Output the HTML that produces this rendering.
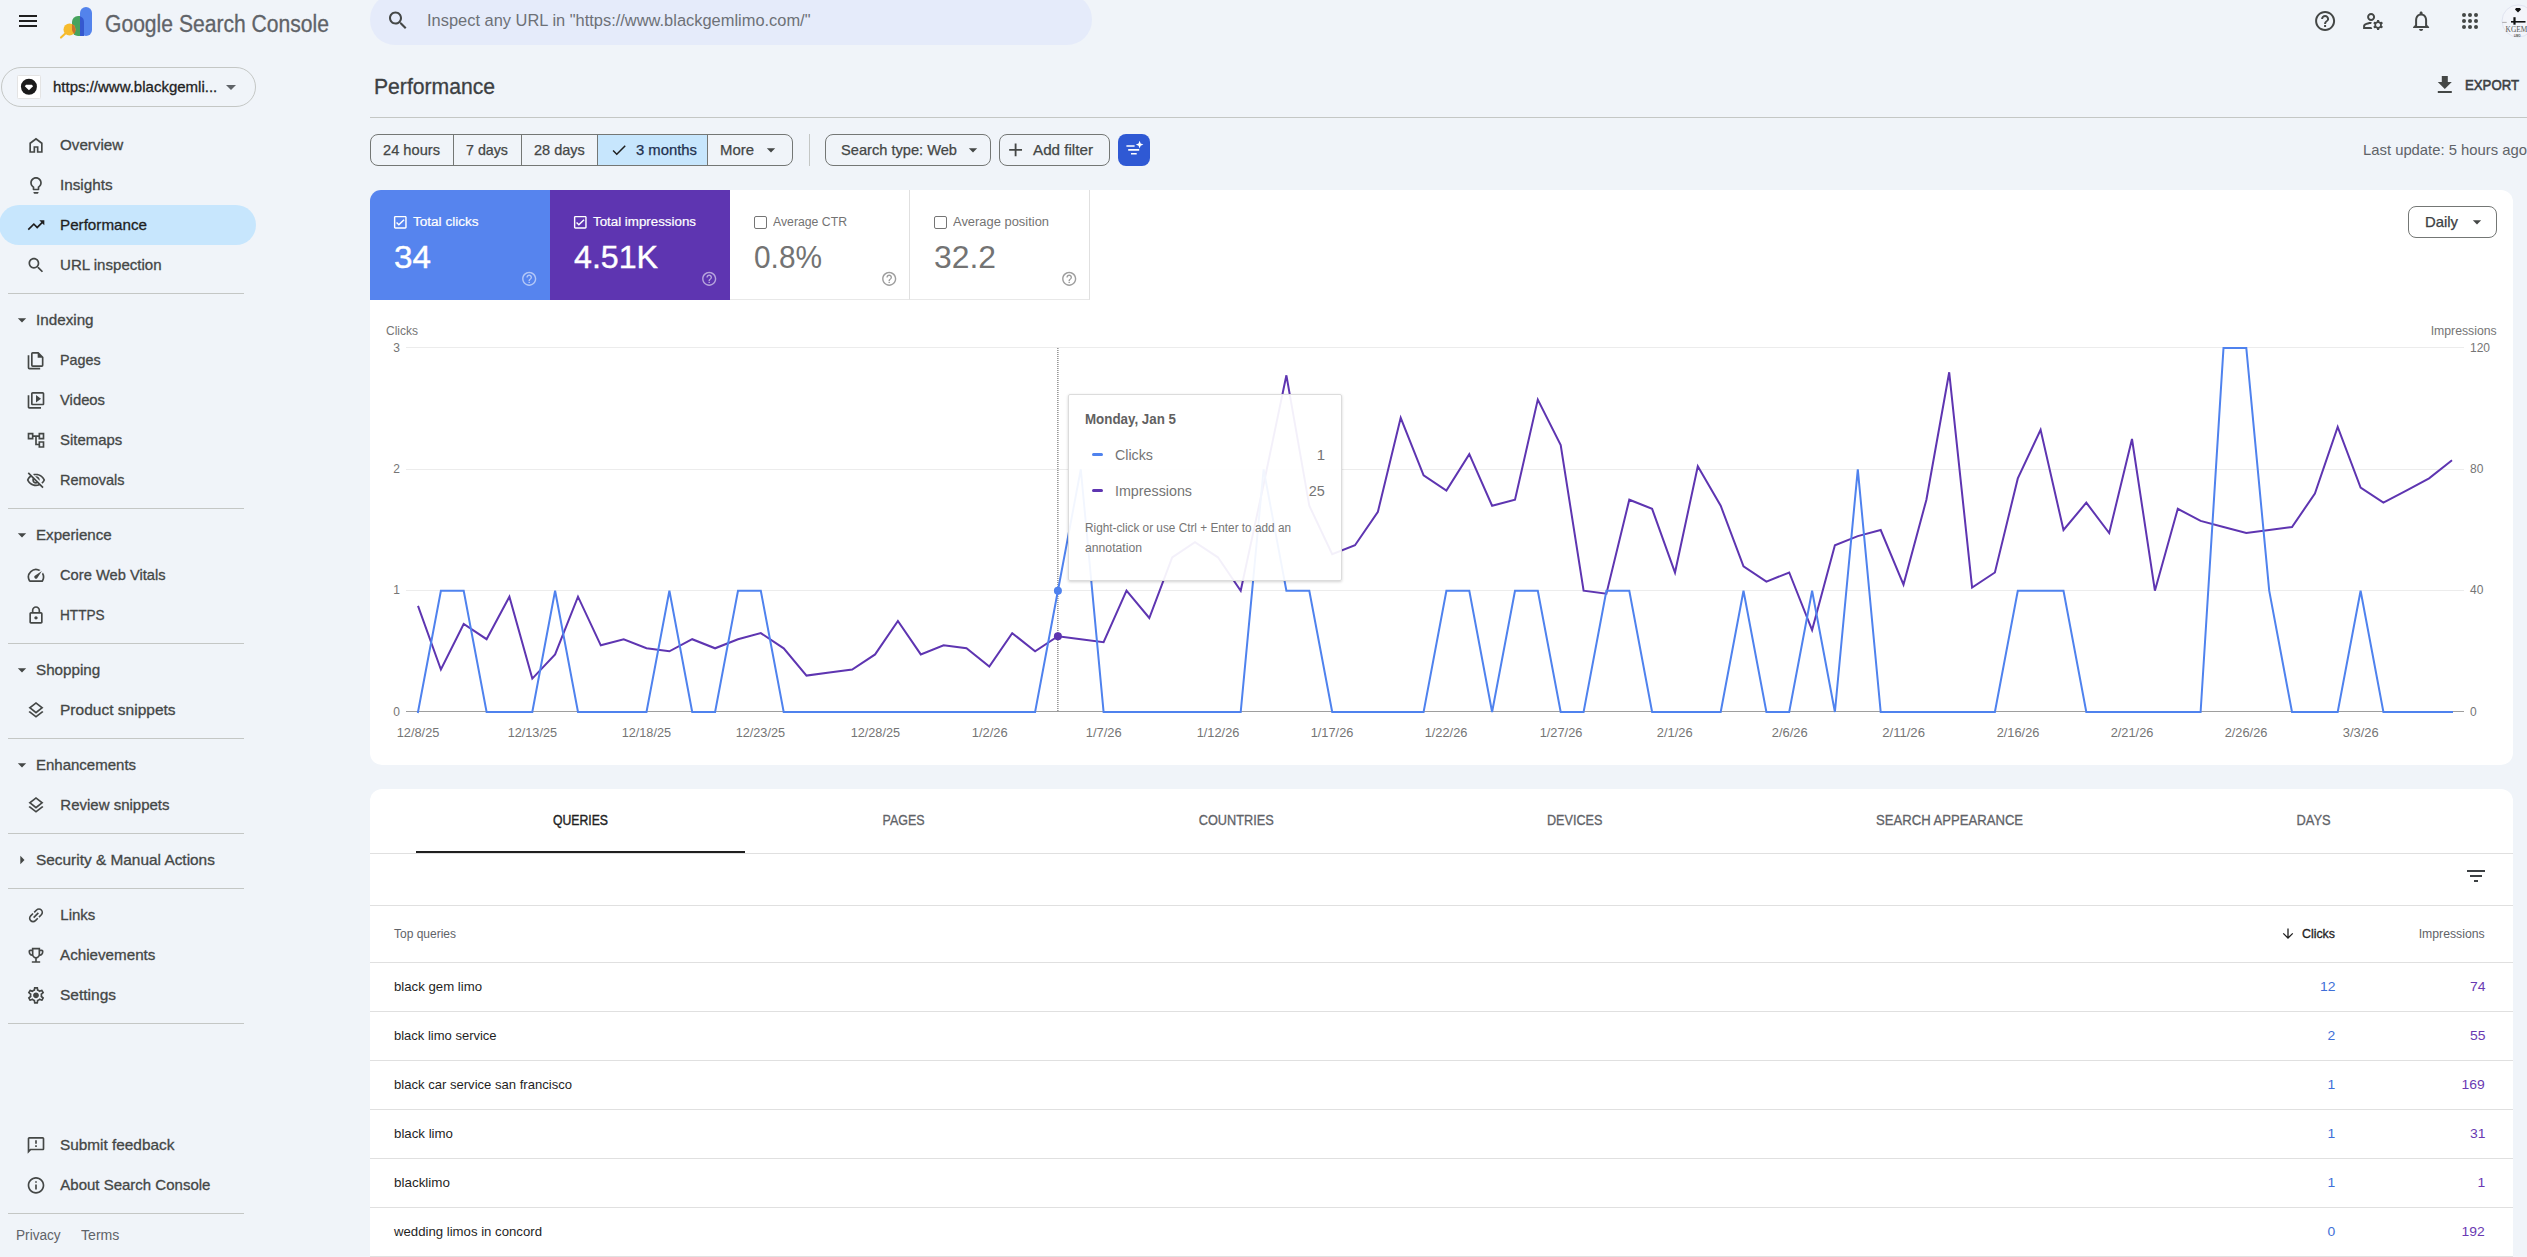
<!DOCTYPE html>
<html lang="en"><head><meta charset="utf-8"><title>Performance</title>
<style>
html,body{margin:0;padding:0}
body{width:2527px;height:1257px;overflow:hidden;background:#f0f4f9;position:relative;font-family:"Liberation Sans",sans-serif}
.t{position:absolute;white-space:pre;display:block}
.b{position:absolute;box-sizing:border-box;display:block}
</style></head><body>
<!-- top bar -->
<svg class="b" style="left:16px;top:9px;" width="25" height="25" viewBox="0 0 25 25" fill="#1f1f1f"><g transform="translate(0.00 0.10) scale(1.0000)"><path d="M3 18h18v-2H3v2zm0-5h18v-2H3v2zm0-7v2h18V6H3z"/></g></svg>
<svg class="b" style="left:58px;top:4px" width="36" height="36" viewBox="0 0 36 36">
<rect x="22" y="3" width="12" height="29" rx="6" fill="#5383ec"/>
<path d="M14 18a6 6 0 0 1 6-6h2v20h-2a6 6 0 0 1-6-6z" fill="#46a35e"/>
<path d="M22 12.340A6 6 0 0 1 26 18V32H22z" fill="#3558cf"/>
<circle cx="11.5" cy="25.5" r="6" fill="#f6bb2d"/>
<path d="M14 19.9a6 6 0 0 1 3.4 4.6 6 6 0 0 1-1 5.4A6 6 0 0 1 14 26z" fill="#c8722e"/>
<path d="M7.6 29.2l-4.6 4.4" stroke="#f6bb2d" stroke-width="2.100" stroke-linecap="round"/>
</svg>
<span class="t" style="left:104.50px;top:9.00px;font-size:23.5px;line-height:31px;color:#5f6368;-webkit-text-stroke:0.3px #5f6368;transform:scaleX(0.8977);transform-origin:left center;">Google Search Console</span>
<div class="b" style="left:370px;top:-6px;width:722px;height:50.5px;background:#e5ebfa;border-radius:25px"></div>
<svg class="b" style="left:386px;top:8px;" width="25" height="25" viewBox="0 0 25 25" fill="#444746"><g transform="translate(0.00 0.50) scale(1.0000)"><path d="M15.5 14h-.79l-.28-.27C15.41 12.59 16 11.11 16 9.5 16 5.91 13.09 3 9.5 3S3 5.91 3 9.5 5.91 16 9.5 16c1.61 0 3.09-.59 4.23-1.57l.27.28v.79l5 4.99L20.49 19l-4.99-5zm-6 0C7.01 14 5 11.99 5 9.5S7.01 5 9.5 5 14 7.01 14 9.5 11.99 14 9.5 14z"/></g></svg>
<span class="t" style="left:427.00px;top:9.30px;font-size:17.4px;line-height:23px;color:#6d7177;transform:scaleX(0.9445);transform-origin:left center;">Inspect any URL in &quot;https://www.blackgemlimo.com/&quot;</span>
<svg class="b" style="left:2313px;top:9px;" width="25" height="25" viewBox="0 0 25 25" fill="#444746"><g transform="translate(0.10 0.00) scale(1.0000)"><path d="M11 18h2v-2h-2v2zm1-16C6.48 2 2 6.48 2 12s4.48 10 10 10 10-4.48 10-10S17.52 2 12 2zm0 18c-4.41 0-8-3.59-8-8s3.59-8 8-8 8 3.59 8 8-3.59 8-8 8zm0-14c-2.21 0-4 1.79-4 4h2c0-1.1.9-2 2-2s2 .9 2 2c0 2-3 1.75-3 5h2c0-2.25 3-2.5 3-5 0-2.21-1.79-4-4-4z"/></g></svg>
<svg class="b" style="left:2361px;top:9px;" width="25" height="25" viewBox="0 0 25 25" fill="#444746"><g transform="translate(0.10 0.00) scale(1.0000)"><path d="M4 18v-.65c0-.34.16-.66.41-.81C6.1 15.53 8.03 15 10 15c.03 0 .05 0 .08.01.1-.7.3-1.37.59-1.98-.22-.02-.44-.03-.67-.03-2.42 0-4.68.67-6.61 1.82-.88.52-1.39 1.5-1.39 2.53V20h9.26c-.42-.6-.75-1.28-.97-2H4zM10 12c2.21 0 4-1.79 4-4s-1.79-4-4-4-4 1.79-4 4 1.79 4 4 4zm0-6c1.1 0 2 .9 2 2s-.9 2-2 2-2-.9-2-2 .9-2 2-2zM20.75 16c0-.22-.03-.42-.06-.63l1.14-1.01-1-1.73-1.45.49c-.32-.27-.68-.48-1.08-.63L18 11h-2l-.3 1.49c-.4.15-.76.36-1.08.63l-1.45-.49-1 1.73 1.14 1.01c-.03.21-.06.41-.06.63s.03.42.06.63l-1.14 1.01 1 1.73 1.45-.49c.32.27.68.48 1.08.63L16 21h2l.3-1.49c.4-.15.76-.36 1.080-.63l1.45.49 1-1.730-1.140-1.010c.03-.21.06-.41.06-.63zM17 18c-1.1 0-2-.9-2-2s.9-2 2-2 2 .9 2 2-.9 2-2 2z"/></g></svg>
<svg class="b" style="left:2409px;top:9px;" width="25" height="25" viewBox="0 0 25 25" fill="#444746"><g transform="translate(0.10 0.00) scale(1.0000)"><path d="M12 22c1.1 0 2-.9 2-2h-4c0 1.1.9 2 2 2zm6-6v-5c0-3.07-1.63-5.64-4.5-6.32V4c0-.83-.67-1.5-1.5-1.5s-1.5.67-1.5 1.5v.68C7.64 5.36 6 7.92 6 11v5l-2 2v1h16v-1l-2-2zm-2 1H8v-6c0-2.48 1.51-4.5 4-4.5s4 2.02 4 4.5v6z"/></g></svg>
<svg class="b" style="left:2458px;top:8px;" width="25" height="25" viewBox="0 0 25 25" fill="#444746"><g transform="translate(0.00 0.90) scale(1.0000)"><circle cx="6" cy="6" r="2" /><circle cx="6" cy="12" r="2" /><circle cx="6" cy="18" r="2" /><circle cx="12" cy="6" r="2" /><circle cx="12" cy="12" r="2" /><circle cx="12" cy="18" r="2" /><circle cx="18" cy="6" r="2" /><circle cx="18" cy="12" r="2" /><circle cx="18" cy="18" r="2" /></g></svg>
<svg class="b" style="left:2501px;top:4px" width="34" height="34" viewBox="0 0 34 34">
<circle cx="17.100" cy="17" r="16.100" fill="#f3f5fa" stroke="#d9dcec" stroke-width="0.700"/>
<path d="M14 5.600l1-1.500h4l1 1.500-3 3z" fill="#111"/>
<path d="M10 17.800h14.500" stroke="#111" stroke-width="1.600"/><path d="M13.500 13.200v7.500" stroke="#111" stroke-width="2.200"/>
<path d="M1.200 18.400h4.500" stroke="#999" stroke-width="0.800"/>
<text x="4.600" y="27.900" font-family="Liberation Serif,serif" font-size="7.400" fill="#555">KGEM</text>
<text x="13" y="32.600" font-family="Liberation Sans,sans-serif" font-size="2.600" fill="#444" font-weight="700">LIMO</text>
</svg>
<!-- sidebar -->
<div class="b" style="left:1px;top:67px;width:255px;height:40px;border:1px solid #c4c7c5;border-radius:20px"></div>
<div class="b" style="left:17.3px;top:75.2px;width:23.4px;height:23.5px;background:#fff;border:1px solid #e4e4e4;border-radius:1.5px"></div>
<svg class="b" style="left:20px;top:78px" width="18" height="18" viewBox="0 0 18 18"><g transform="translate(0.43 0.27)"><circle cx="8.5" cy="8.500" r="8" fill="#1a1a1a"/><path d="M5.600 6.500h5.800l1.250 1.550-4.150 4-4.150-4z" fill="#fff"/></g></svg>
<span class="t" style="left:53.00px;top:76.60px;font-size:15px;line-height:20px;color:#1f1f1f;-webkit-text-stroke:0.3px #1f1f1f;">https://www.blackgemli...</span>
<svg class="b" style="left:219px;top:74px;" width="25" height="25" viewBox="0 0 25 25" fill="#5f6368"><g transform="translate(0.00 0.90) scale(1.0000)"><path d="M7 10l5 5 5-5z"/></g></svg>
<div class="b" style="left:-1px;top:205px;width:257px;height:40px;background:#c7e6fd;border-radius:20px"></div>
<svg class="b" style="left:26px;top:135px;" width="21" height="21" viewBox="0 0 21 21" fill="#444746"><g transform="translate(0.00 0.30) scale(0.8333)"><path d="M6 19h3v-6h6v6h3v-9l-6-4.5L6 10v9zm-2 2V9l8-6 8 6v12h-7v-6h-2v6H4z"/></g></svg>
<span class="t" style="left:60.30px;top:134.70px;font-size:15px;line-height:20px;color:#444746;-webkit-text-stroke:0.3px #444746;transform:scaleX(1.0109);transform-origin:left center;">Overview</span>
<svg class="b" style="left:26px;top:175px;" width="21" height="21" viewBox="0 0 21 21" fill="#444746"><g transform="translate(0.00 0.30) scale(0.8333)"><path d="M9 21c0 .55.45 1 1 1h4c.55 0 1-.45 1-1v-1H9v1zm3-19C8.14 2 5 5.14 5 9c0 2.38 1.19 4.47 3 5.74V17c0 .55.45 1 1 1h6c.55 0 1-.45 1-1v-2.26c1.81-1.27 3-3.36 3-5.74 0-3.86-3.14-7-7-7zm2.85 11.1l-.85.6V16h-4v-2.3l-.85-.6C7.8 12.16 7 10.63 7 9c0-2.76 2.24-5 5-5s5 2.24 5 5c0 1.63-.8 3.16-2.15 4.1z"/></g></svg>
<span class="t" style="left:60.30px;top:174.70px;font-size:15px;line-height:20px;color:#444746;-webkit-text-stroke:0.3px #444746;transform:scaleX(1.0173);transform-origin:left center;">Insights</span>
<svg class="b" style="left:26px;top:215px;" width="21" height="21" viewBox="0 0 21 21" fill="#1f1f1f"><g transform="translate(0.00 0.30) scale(0.8333)"><path d="M16 6l2.29 2.29-4.88 4.88-4-4L2 16.59 3.41 18l6-6 4 4 6.3-6.29L22 12V6z"/></g></svg>
<span class="t" style="left:60.30px;top:214.70px;font-size:15px;line-height:20px;color:#1f1f1f;-webkit-text-stroke:0.3px #1f1f1f;transform:scaleX(1.0131);transform-origin:left center;">Performance</span>
<svg class="b" style="left:26px;top:255px;" width="21" height="21" viewBox="0 0 21 21" fill="#444746"><g transform="translate(0.00 0.30) scale(0.8333)"><path d="M15.5 14h-.79l-.28-.27C15.41 12.59 16 11.11 16 9.5 16 5.91 13.09 3 9.5 3S3 5.91 3 9.5 5.91 16 9.5 16c1.61 0 3.09-.59 4.23-1.57l.27.28v.79l5 4.99L20.49 19l-4.99-5zm-6 0C7.01 14 5 11.99 5 9.5S7.01 5 9.5 5 14 7.01 14 9.5 11.99 14 9.5 14z"/></g></svg>
<span class="t" style="left:60.30px;top:254.70px;font-size:15px;line-height:20px;color:#444746;-webkit-text-stroke:0.3px #444746;transform:scaleX(1.0042);transform-origin:left center;">URL inspection</span>
<div class="b" style="left:8px;top:293px;width:236px;height:1px;background:#c4c7c5"></div>
<svg class="b" style="left:12px;top:310px;" width="21" height="21" viewBox="0 0 21 21" fill="#444746"><g transform="translate(0.00 0.00) scale(0.8333)"><path d="M7 10l5 5 5-5z"/></g></svg>
<span class="t" style="left:36.00px;top:309.70px;font-size:15px;line-height:20px;color:#444746;-webkit-text-stroke:0.3px #444746;transform:scaleX(1.0155);transform-origin:left center;">Indexing</span>
<svg class="b" style="left:26px;top:350px;" width="21" height="21" viewBox="0 0 21 21" fill="#444746"><g transform="translate(0.00 0.30) scale(0.8333)"><path d="M8 2h7l6 6v10a2 2 0 0 1-2 2H8a2 2 0 0 1-2-2V4a2 2 0 0 1 2-2zm0 2v14h11V9h-5V4H8zM2 6h2v15h13v2H4a2 2 0 0 1-2-2V6z"/></g></svg>
<span class="t" style="left:60.30px;top:349.70px;font-size:15px;line-height:20px;color:#444746;-webkit-text-stroke:0.3px #444746;transform:scaleX(0.9542);transform-origin:left center;">Pages</span>
<svg class="b" style="left:26px;top:390px;" width="21" height="21" viewBox="0 0 21 21" fill="#444746"><g transform="translate(0.00 0.30) scale(0.8333)"><path d="M4 6H2v14c0 1.1.9 2 2 2h14v-2H4V6zm16-4H8c-1.1 0-2 .9-2 2v12c0 1.1.9 2 2 2h12c1.1 0 2-.9 2-2V4c0-1.1-.9-2-2-2zm0 14H8V4h12v12zM12 5.5v9l6-4.5z"/></g></svg>
<span class="t" style="left:60.30px;top:389.70px;font-size:15px;line-height:20px;color:#444746;-webkit-text-stroke:0.3px #444746;transform:scaleX(0.9870);transform-origin:left center;">Videos</span>
<svg class="b" style="left:26px;top:430px;" width="21" height="21" viewBox="0 0 21 21" fill="#444746"><g transform="translate(0.00 0.30) scale(0.8333)"><path d="M22 11V3h-7v3H9V3H2v8h7V8h2v10h4v3h7v-8h-7v3h-2V8h2v3h7zM7 9H4V5h3v4zm10 6h3v4h-3v-4zm0-10h3v4h-3V5z"/></g></svg>
<span class="t" style="left:60.30px;top:429.70px;font-size:15px;line-height:20px;color:#444746;-webkit-text-stroke:0.3px #444746;transform:scaleX(0.9947);transform-origin:left center;">Sitemaps</span>
<svg class="b" style="left:26px;top:470px;" width="21" height="21" viewBox="0 0 21 21" fill="#444746"><g transform="translate(0.00 0.30) scale(0.8333)"><path d="M12 6c3.79 0 7.17 2.13 8.82 5.5-.59 1.22-1.42 2.27-2.41 3.12l1.41 1.41c1.39-1.23 2.49-2.77 3.18-4.53C21.27 7.11 17 4 12 4c-1.27 0-2.49.2-3.64.57l1.65 1.65C10.66 6.09 11.32 6 12 6zm-1.07 1.14L13 9.21c.57.25 1.03.71 1.28 1.28l2.07 2.07c.08-.34.14-.7.14-1.07C16.5 9.01 14.48 7 12 7c-.37 0-.72.05-1.07.14zM2.01 3.87l2.68 2.68C3.06 7.83 1.77 9.53 1 11.5 2.73 15.89 7 19 12 19c1.52 0 2.98-.29 4.32-.82l3.42 3.42 1.41-1.41L3.42 2.45 2.01 3.87zm7.5 7.5l2.61 2.61c-.04.01-.08.02-.12.02-1.38 0-2.5-1.12-2.5-2.5 0-.05.01-.08.01-.13zm-3.4-3.4l1.75 1.75c-.23.55-.36 1.15-.36 1.78 0 2.48 2.02 4.5 4.5 4.5.63 0 1.23-.13 1.77-.36l.98.98c-.88.24-1.8.38-2.75.38-3.79 0-7.17-2.13-8.82-5.5.7-1.43 1.72-2.61 2.93-3.53z"/></g></svg>
<span class="t" style="left:60.30px;top:469.70px;font-size:15px;line-height:20px;color:#444746;-webkit-text-stroke:0.3px #444746;transform:scaleX(0.9672);transform-origin:left center;">Removals</span>
<div class="b" style="left:8px;top:508px;width:236px;height:1px;background:#c4c7c5"></div>
<svg class="b" style="left:12px;top:525px;" width="21" height="21" viewBox="0 0 21 21" fill="#444746"><g transform="translate(0.00 0.00) scale(0.8333)"><path d="M7 10l5 5 5-5z"/></g></svg>
<span class="t" style="left:36.00px;top:524.70px;font-size:15px;line-height:20px;color:#444746;-webkit-text-stroke:0.3px #444746;transform:scaleX(1.0087);transform-origin:left center;">Experience</span>
<svg class="b" style="left:26px;top:565px;" width="21" height="21" viewBox="0 0 21 21" fill="#444746"><g transform="translate(0.00 0.30) scale(0.8333)"><path d="M20.38 8.57l-1.23 1.85a8 8 0 0 1-.22 7.58H5.07A8 8 0 0 1 15.58 6.85l1.85-1.23A10 10 0 0 0 3.35 19a2 2 0 0 0 1.72 1h13.85a2 2 0 0 0 1.74-1 10 10 0 0 0-.27-10.44zm-9.79 6.84a2 2 0 0 0 2.83 0l5.66-8.49-8.49 5.66a2 2 0 0 0 0 2.83z"/></g></svg>
<span class="t" style="left:60.30px;top:564.70px;font-size:15px;line-height:20px;color:#444746;-webkit-text-stroke:0.3px #444746;transform:scaleX(0.9784);transform-origin:left center;">Core Web Vitals</span>
<svg class="b" style="left:26px;top:605px;" width="21" height="21" viewBox="0 0 21 21" fill="#444746"><g transform="translate(0.00 0.30) scale(0.8333)"><path d="M18 8h-1V6c0-2.76-2.24-5-5-5S7 3.24 7 6v2H6c-1.1 0-2 .9-2 2v10c0 1.1.9 2 2 2h12c1.1 0 2-.9 2-2V10c0-1.1-.9-2-2-2zM9 6c0-1.66 1.34-3 3-3s3 1.34 3 3v2H9V6zm9 14H6V10h12v10zm-6-3c1.1 0 2-.9 2-2s-.9-2-2-2-2 .9-2 2 .9 2 2 2z"/></g></svg>
<span class="t" style="left:60.30px;top:604.70px;font-size:15px;line-height:20px;color:#444746;-webkit-text-stroke:0.3px #444746;transform:scaleX(0.9070);transform-origin:left center;">HTTPS</span>
<div class="b" style="left:8px;top:643px;width:236px;height:1px;background:#c4c7c5"></div>
<svg class="b" style="left:12px;top:660px;" width="21" height="21" viewBox="0 0 21 21" fill="#444746"><g transform="translate(0.00 0.00) scale(0.8333)"><path d="M7 10l5 5 5-5z"/></g></svg>
<span class="t" style="left:36.00px;top:659.70px;font-size:15px;line-height:20px;color:#444746;-webkit-text-stroke:0.3px #444746;transform:scaleX(1.0141);transform-origin:left center;">Shopping</span>
<svg class="b" style="left:26px;top:700px;" width="21" height="21" viewBox="0 0 21 21" fill="#444746"><g transform="translate(0.00 0.30) scale(0.8333)"><path d="M11.99 18.54l-7.37-5.73L3 14.07l9 7 9-7-1.63-1.27zM12 16l7.36-5.73L21 9l-9-7-9 7 1.63 1.27L12 16zm0-11.47L17.74 9 12 13.47 6.26 9 12 4.53z"/></g></svg>
<span class="t" style="left:60.30px;top:699.70px;font-size:15px;line-height:20px;color:#444746;-webkit-text-stroke:0.3px #444746;transform:scaleX(1.0346);transform-origin:left center;">Product snippets</span>
<div class="b" style="left:8px;top:738px;width:236px;height:1px;background:#c4c7c5"></div>
<svg class="b" style="left:12px;top:755px;" width="21" height="21" viewBox="0 0 21 21" fill="#444746"><g transform="translate(0.00 0.00) scale(0.8333)"><path d="M7 10l5 5 5-5z"/></g></svg>
<span class="t" style="left:36.00px;top:754.70px;font-size:15px;line-height:20px;color:#444746;-webkit-text-stroke:0.3px #444746;">Enhancements</span>
<svg class="b" style="left:26px;top:795px;" width="21" height="21" viewBox="0 0 21 21" fill="#444746"><g transform="translate(0.00 0.30) scale(0.8333)"><path d="M11.99 18.54l-7.37-5.73L3 14.07l9 7 9-7-1.63-1.27zM12 16l7.36-5.73L21 9l-9-7-9 7 1.63 1.27L12 16zm0-11.47L17.74 9 12 13.47 6.26 9 12 4.53z"/></g></svg>
<span class="t" style="left:60.30px;top:794.70px;font-size:15px;line-height:20px;color:#444746;-webkit-text-stroke:0.3px #444746;">Review snippets</span>
<div class="b" style="left:8px;top:833px;width:236px;height:1px;background:#c4c7c5"></div>
<svg class="b" style="left:12px;top:850px;" width="21" height="21" viewBox="0 0 21 21" fill="#444746"><g transform="translate(0.00 0.00) scale(0.8333)"><path d="M10 17l5-5-5-5v10z"/></g></svg>
<span class="t" style="left:36.00px;top:849.70px;font-size:15px;line-height:20px;color:#444746;-webkit-text-stroke:0.3px #444746;transform:scaleX(1.0266);transform-origin:left center;">Security &amp; Manual Actions</span>
<div class="b" style="left:8px;top:888px;width:236px;height:1px;background:#c4c7c5"></div>
<svg class="b" style="left:26px;top:905px;" width="21" height="21" viewBox="0 0 21 21" fill="#444746"><g transform="translate(0.00 0.30) scale(0.8333) rotate(-45 12.0 12.0)"><path d="M3.9 12c0-1.71 1.39-3.1 3.1-3.1h4V7H7c-2.76 0-5 2.24-5 5s2.24 5 5 5h4v-1.9H7c-1.71 0-3.1-1.39-3.1-3.1zM8 13h8v-2H8v2zm9-6h-4v1.9h4c1.71 0 3.1 1.39 3.1 3.1s-1.390 3.1-3.1 3.1h-4V17h4c2.76 0 5-2.24 5-5s-2.24-5-5-5z"/></g></svg>
<span class="t" style="left:60.30px;top:904.70px;font-size:15px;line-height:20px;color:#444746;-webkit-text-stroke:0.3px #444746;">Links</span>
<svg class="b" style="left:26px;top:945px;" width="21" height="21" viewBox="0 0 21 21" fill="#444746"><g transform="translate(0.00 0.30) scale(0.8333)"><path d="M19 5h-2V3H7v2H5c-1.1 0-2 .9-2 2v1c0 2.55 1.92 4.63 4.39 4.94.63 1.5 1.98 2.63 3.61 2.96V19H7v2h10v-2h-4v-3.1c1.63-.33 2.98-1.46 3.61-2.96C19.08 12.63 21 10.55 21 8V7c0-1.1-.9-2-2-2zM5 8V7h2v3.82C5.84 10.4 5 9.3 5 8zm7 6c-1.65 0-3-1.35-3-3V5h6v6c0 1.65-1.35 3-3 3zm7-6c0 1.3-.84 2.4-2 2.82V7h2v1z"/></g></svg>
<span class="t" style="left:60.30px;top:944.70px;font-size:15px;line-height:20px;color:#444746;-webkit-text-stroke:0.3px #444746;transform:scaleX(1.0125);transform-origin:left center;">Achievements</span>
<svg class="b" style="left:26px;top:985px;" width="21" height="21" viewBox="0 0 21 21" fill="#444746"><g transform="translate(0.00 0.30) scale(0.8333)"><path d="M19.43 12.98c.04-.32.07-.64.07-.98 0-.34-.03-.66-.07-.98l2.11-1.65c.19-.15.24-.42.12-.64l-2-3.46c-.09-.16-.26-.25-.44-.25-.06 0-.12.01-.17.03l-2.49 1c-.52-.4-1.08-.73-1.69-.98l-.38-2.65C14.46 2.18 14.25 2 14 2h-4c-.25 0-.46.18-.49.42l-.38 2.65c-.61.25-1.17.59-1.69.98l-2.49-1c-.06-.02-.12-.03-.18-.03-.17 0-.34.09-.43.25l-2 3.46c-.13.22-.07.49.12.64l2.11 1.65c-.04.32-.07.65-.07.98 0 .33.03.66.07.98l-2.11 1.65c-.19.15-.24.42-.12.64l2 3.46c.09.16.26.25.44.25.06 0 .12-.01.17-.03l2.49-1c.52.4 1.08.73 1.69.98l.38 2.65c.03.24.24.42.49.42h4c.25 0 .46-.18.49-.42l.38-2.65c.61-.25 1.17-.59 1.69-.98l2.49 1c.06.02.12.03.18.03.17 0 .34-.09.43-.25l2-3.46c.12-.22.07-.49-.12-.64l-2.11-1.65zm-1.98-1.71c.04.31.05.52.05.73 0 .21-.02.43-.05.73l-.14 1.13.89.7 1.08.84-.7 1.21-1.27-.51-1.04-.42-.9.68c-.43.32-.84.56-1.25.73l-1.06.43-.16 1.13-.2 1.35h-1.4l-.19-1.35-.16-1.13-1.06-.43c-.43-.18-.83-.41-1.23-.71l-.91-.7-1.06.43-1.27.51-.7-1.21 1.08-.84.89-.7-.14-1.13c-.03-.31-.05-.54-.05-.74s.02-.43.05-.73l.14-1.13-.89-.7-1.08-.84.7-1.21 1.27.51 1.04.42.9-.68c.43-.32.84-.56 1.25-.73l1.06-.43.16-1.13.2-1.35h1.39l.19 1.35.16 1.13 1.06.43c.43.18.83.41 1.23.71l.91.7 1.06-.43 1.27-.51.7 1.21-1.07.85-.89.7.14 1.13zM12 8.5c-1.93 0-3.5 1.57-3.5 3.5s1.57 3.5 3.5 3.5 3.5-1.57 3.5-3.5-1.57-3.5-3.5-3.5z"/></g></svg>
<span class="t" style="left:60.30px;top:984.70px;font-size:15px;line-height:20px;color:#444746;-webkit-text-stroke:0.3px #444746;transform:scaleX(1.0332);transform-origin:left center;">Settings</span>
<div class="b" style="left:8px;top:1023px;width:236px;height:1px;background:#c4c7c5"></div>
<svg class="b" style="left:26px;top:1135px;" width="21" height="21" viewBox="0 0 21 21" fill="#444746"><g transform="translate(0.00 0.30) scale(0.8333)"><path d="M20 2H4c-1.1 0-1.99.9-1.99 2L2 22l4-4h14c1.1 0 2-.9 2-2V4c0-1.1-.9-2-2-2zm0 14H5.17l-.59.59-.58.58V4h16v12zm-9-4h2v2h-2zm0-6h2v4h-2z"/></g></svg>
<span class="t" style="left:60.30px;top:1134.70px;font-size:15px;line-height:20px;color:#444746;-webkit-text-stroke:0.3px #444746;transform:scaleX(1.0230);transform-origin:left center;">Submit feedback</span>
<svg class="b" style="left:26px;top:1175px;" width="21" height="21" viewBox="0 0 21 21" fill="#444746"><g transform="translate(0.00 0.30) scale(0.8333)"><path d="M11 7h2v2h-2zm0 4h2v6h-2zm1-9C6.48 2 2 6.48 2 12s4.48 10 10 10 10-4.48 10-10S17.52 2 12 2zm0 18c-4.41 0-8-3.59-8-8s3.59-8 8-8 8 3.59 8 8-3.59 8-8 8z"/></g></svg>
<span class="t" style="left:60.30px;top:1174.70px;font-size:15px;line-height:20px;color:#444746;-webkit-text-stroke:0.3px #444746;">About Search Console</span>
<div class="b" style="left:8px;top:1213px;width:236px;height:1px;background:#c4c7c5"></div>
<span class="t" style="left:16.20px;top:1225.60px;font-size:14px;line-height:18px;color:#5f6368;transform:scaleX(0.9737);transform-origin:left center;">Privacy</span>
<span class="t" style="left:81.30px;top:1225.60px;font-size:14px;line-height:18px;color:#5f6368;transform:scaleX(1.0072);transform-origin:left center;">Terms</span>
<!-- header -->
<span class="t" style="left:374.00px;top:72.50px;font-size:21.5px;line-height:28px;color:#3c4043;-webkit-text-stroke:0.3px #3c4043;transform:scaleX(0.9830);transform-origin:left center;">Performance</span>
<svg class="b" style="left:2432px;top:73px;" width="25" height="25" viewBox="0 0 25 25" fill="#444746"><g transform="translate(0.80 0.00) scale(1.0000)"><path d="M19 9h-4V3H9v6H5l7 7 7-7zM5 18v2h14v-2H5z"/></g></svg>
<span class="t" style="left:2465.00px;top:75.60px;font-size:14px;line-height:18px;color:#3c4043;-webkit-text-stroke:0.55px #3c4043;transform:scaleX(0.9422);transform-origin:left center;">EXPORT</span>
<div class="b" style="left:370px;top:117px;width:2157px;height:1px;background:#c4c7c5"></div>
<!-- filters -->
<div class="b" style="left:370px;top:134px;width:423px;height:32px;border:1px solid #747775;border-radius:8px"></div>
<div class="b" style="left:597px;top:135px;width:110px;height:30px;background:#c7e6fd"></div>
<div class="b" style="left:453px;top:135px;width:1px;height:30px;background:#747775"></div>
<div class="b" style="left:521px;top:135px;width:1px;height:30px;background:#747775"></div>
<div class="b" style="left:597px;top:135px;width:1px;height:30px;background:#747775"></div>
<div class="b" style="left:707px;top:135px;width:1px;height:30px;background:#747775"></div>
<span class="t" style="left:383.00px;top:141.00px;font-size:14.5px;line-height:19px;color:#444746;-webkit-text-stroke:0.25px #444746;transform:scaleX(1.0100);transform-origin:left center;">24 hours</span>
<span class="t" style="left:466.00px;top:141.00px;font-size:14.5px;line-height:19px;color:#444746;-webkit-text-stroke:0.25px #444746;transform:scaleX(0.9828);transform-origin:left center;">7 days</span>
<span class="t" style="left:534.00px;top:141.00px;font-size:14.5px;line-height:19px;color:#444746;-webkit-text-stroke:0.25px #444746;">28 days</span>
<svg class="b" style="left:610px;top:141px;" width="19" height="19" viewBox="0 0 19 19" fill="#1f1f1f"><g transform="translate(0.00 0.00) scale(0.7500)"><path d="M9 16.17L4.83 12l-1.42 1.41L9 19 21 7l-1.41-1.41z"/></g></svg>
<span class="t" style="left:635.50px;top:141.00px;font-size:14.5px;line-height:19px;color:#1f3150;-webkit-text-stroke:0.25px #1f3150;transform:scaleX(1.0225);transform-origin:left center;">3 months</span>
<span class="t" style="left:720.00px;top:141.00px;font-size:14.5px;line-height:19px;color:#444746;-webkit-text-stroke:0.25px #444746;transform:scaleX(1.0288);transform-origin:left center;">More</span>
<svg class="b" style="left:761px;top:140px;" width="21" height="21" viewBox="0 0 21 21" fill="#444746"><g transform="translate(0.00 0.00) scale(0.8333)"><path d="M7 10l5 5 5-5z"/></g></svg>
<div class="b" style="left:809px;top:134px;width:1px;height:32px;background:#c4c7c5"></div>
<div class="b" style="left:825px;top:134px;width:166px;height:32px;border:1px solid #747775;border-radius:8px"></div>
<span class="t" style="left:841.00px;top:141.00px;font-size:14.5px;line-height:19px;color:#444746;-webkit-text-stroke:0.25px #444746;transform:scaleX(1.0087);transform-origin:left center;">Search type: Web</span>
<svg class="b" style="left:963px;top:140px;" width="21" height="21" viewBox="0 0 21 21" fill="#444746"><g transform="translate(0.00 0.00) scale(0.8333)"><path d="M7 10l5 5 5-5z"/></g></svg>
<div class="b" style="left:999px;top:134px;width:111px;height:32px;border:1px solid #747775;border-radius:8px"></div>
<svg class="b" style="left:1004px;top:138px;" width="23" height="23" viewBox="0 0 23 23" fill="#444746"><g transform="translate(0.60 0.90) scale(0.9167)"><path d="M19 13h-6v6h-2v-6H5v-2h6V5h2v6h6v2z"/></g></svg>
<span class="t" style="left:1033.00px;top:141.00px;font-size:14.5px;line-height:19px;color:#444746;-webkit-text-stroke:0.25px #444746;transform:scaleX(1.0483);transform-origin:left center;">Add filter</span>
<div class="b" style="left:1118px;top:134px;width:32px;height:32px;background:#2f59d4;border-radius:8px"></div>
<svg class="b" style="left:1124px;top:140px" width="20" height="20" viewBox="0 0 20 20" fill="none" stroke="#fff" stroke-width="1.6"><path d="M2.400 6h8.200M4.200 9.900h11M7 13.800h5.700"/><path d="M15.600 0.800l1.050 2.750 2.750 1.050-2.750 1.050-1.050 2.750-1.050-2.750-2.750-1.050 2.750-1.050z" fill="#fff" stroke="none"/></svg>
<span class="t" style="left:2363.00px;top:141.00px;font-size:14.5px;line-height:19px;color:#5f6368;transform:scaleX(1.0222);transform-origin:left center;">Last update: 5 hours ago</span>
<!-- chart card -->
<div class="b" style="left:369.5px;top:189.5px;width:2143.5px;height:575.5px;background:#fff;border-radius:12px"></div>
<div class="b" style="left:370px;top:190px;width:180px;height:110px;background:#5684ee;border-top-left-radius:11px"></div>
<div class="b" style="left:550px;top:190px;width:180px;height:110px;background:#5e35b1"></div>
<div class="b" style="left:730px;top:190px;width:180px;height:110px;border-right:1px solid #e0e0e0;border-bottom:1px solid #e8e8e8"></div>
<div class="b" style="left:910px;top:190px;width:180px;height:110px;border-right:1px solid #e0e0e0;border-bottom:1px solid #e8e8e8"></div>
<svg class="b" style="left:391px;top:213px;" width="18" height="18" viewBox="0 0 18 18" fill="#fff"><g transform="translate(0.80 0.80) scale(0.7083)"><path d="M19 3H5c-1.11 0-2 .9-2 2v14c0 1.1.89 2 2 2h14c1.11 0 2-.9 2-2V5c0-1.1-.89-2-2-2zm0 16H5V5h14v14zM17.99 9l-1.41-1.42-6.59 6.59-2.58-2.57-1.42 1.41 4 3.99z"/></g></svg>
<span class="t" style="left:413.00px;top:214.00px;font-size:12.5px;line-height:16px;color:#fff;-webkit-text-stroke:0.2px #fff;transform:scaleX(1.0838);transform-origin:left center;">Total clicks</span>
<span class="t" style="left:393.50px;top:236.00px;font-size:32px;line-height:42px;color:#fff;-webkit-text-stroke:0.4px #fff;transform:scaleX(1.0395);transform-origin:left center;">34</span>
<svg class="b" style="left:520px;top:270px;" width="18" height="18" viewBox="0 0 18 18" fill="rgba(255,255,255,.55)"><g transform="translate(0.70 0.30) scale(0.7083)"><path d="M11 18h2v-2h-2v2zm1-16C6.48 2 2 6.48 2 12s4.48 10 10 10 10-4.48 10-10S17.52 2 12 2zm0 18c-4.41 0-8-3.59-8-8s3.59-8 8-8 8 3.59 8 8-3.59 8-8 8zm0-14c-2.21 0-4 1.79-4 4h2c0-1.1.9-2 2-2s2 .9 2 2c0 2-3 1.75-3 5h2c0-2.25 3-2.5 3-5 0-2.21-1.79-4-4-4z"/></g></svg>
<svg class="b" style="left:571px;top:213px;" width="18" height="18" viewBox="0 0 18 18" fill="#fff"><g transform="translate(0.80 0.80) scale(0.7083)"><path d="M19 3H5c-1.11 0-2 .9-2 2v14c0 1.1.89 2 2 2h14c1.11 0 2-.9 2-2V5c0-1.1-.89-2-2-2zm0 16H5V5h14v14zM17.99 9l-1.41-1.42-6.59 6.59-2.58-2.57-1.42 1.41 4 3.99z"/></g></svg>
<span class="t" style="left:593.00px;top:214.00px;font-size:12.5px;line-height:16px;color:#fff;-webkit-text-stroke:0.2px #fff;transform:scaleX(1.0665);transform-origin:left center;">Total impressions</span>
<span class="t" style="left:573.50px;top:236.00px;font-size:32px;line-height:42px;color:#fff;-webkit-text-stroke:0.4px #fff;transform:scaleX(1.0045);transform-origin:left center;">4.51K</span>
<svg class="b" style="left:700px;top:270px;" width="18" height="18" viewBox="0 0 18 18" fill="rgba(255,255,255,.55)"><g transform="translate(0.70 0.30) scale(0.7083)"><path d="M11 18h2v-2h-2v2zm1-16C6.48 2 2 6.48 2 12s4.48 10 10 10 10-4.48 10-10S17.52 2 12 2zm0 18c-4.41 0-8-3.59-8-8s3.59-8 8-8 8 3.59 8 8-3.59 8-8 8zm0-14c-2.21 0-4 1.79-4 4h2c0-1.1.9-2 2-2s2 .9 2 2c0 2-3 1.75-3 5h2c0-2.25 3-2.5 3-5 0-2.21-1.79-4-4-4z"/></g></svg>
<div class="b" style="left:754px;top:216px;width:12.8px;height:12.8px;border:1.3px solid #757575;border-radius:2px"></div>
<span class="t" style="left:773.00px;top:214.00px;font-size:12.5px;line-height:16px;color:#737373;transform:scaleX(0.9801);transform-origin:left center;">Average CTR</span>
<span class="t" style="left:753.50px;top:236.00px;font-size:32px;line-height:42px;color:#737373;transform:scaleX(0.9323);transform-origin:left center;">0.8%</span>
<svg class="b" style="left:880px;top:270px;" width="18" height="18" viewBox="0 0 18 18" fill="#9e9e9e"><g transform="translate(0.70 0.30) scale(0.7083)"><path d="M11 18h2v-2h-2v2zm1-16C6.48 2 2 6.48 2 12s4.48 10 10 10 10-4.48 10-10S17.52 2 12 2zm0 18c-4.41 0-8-3.59-8-8s3.59-8 8-8 8 3.59 8 8-3.59 8-8 8zm0-14c-2.21 0-4 1.79-4 4h2c0-1.1.9-2 2-2s2 .9 2 2c0 2-3 1.75-3 5h2c0-2.25 3-2.5 3-5 0-2.21-1.79-4-4-4z"/></g></svg>
<div class="b" style="left:934px;top:216px;width:12.8px;height:12.8px;border:1.3px solid #757575;border-radius:2px"></div>
<span class="t" style="left:953.00px;top:214.00px;font-size:12.5px;line-height:16px;color:#737373;transform:scaleX(1.0335);transform-origin:left center;">Average position</span>
<span class="t" style="left:933.50px;top:236.00px;font-size:32px;line-height:42px;color:#737373;transform:scaleX(0.9955);transform-origin:left center;">32.2</span>
<svg class="b" style="left:1060px;top:270px;" width="18" height="18" viewBox="0 0 18 18" fill="#9e9e9e"><g transform="translate(0.70 0.30) scale(0.7083)"><path d="M11 18h2v-2h-2v2zm1-16C6.48 2 2 6.48 2 12s4.48 10 10 10 10-4.48 10-10S17.52 2 12 2zm0 18c-4.41 0-8-3.59-8-8s3.59-8 8-8 8 3.59 8 8-3.59 8-8 8zm0-14c-2.21 0-4 1.79-4 4h2c0-1.1.9-2 2-2s2 .9 2 2c0 2-3 1.75-3 5h2c0-2.25 3-2.5 3-5 0-2.21-1.79-4-4-4z"/></g></svg>
<div class="b" style="left:2408px;top:206px;width:89px;height:32px;border:1px solid #747775;border-radius:8px"></div>
<span class="t" style="left:2425.00px;top:213.00px;font-size:14.5px;line-height:19px;color:#3c4043;-webkit-text-stroke:0.25px #3c4043;transform:scaleX(1.0238);transform-origin:left center;">Daily</span>
<svg class="b" style="left:2467px;top:212px;" width="21" height="21" viewBox="0 0 21 21" fill="#444746"><g transform="translate(0.00 0.00) scale(0.8333)"><path d="M7 10l5 5 5-5z"/></g></svg>
<!-- chart -->
<svg class="b" style="left:0;top:0" width="2527" height="780" viewBox="0 0 2527 780"><rect x="406" y="347" width="2058" height="1" fill="#ececec"/><rect x="406" y="469" width="2058" height="1" fill="#ececec"/><rect x="406" y="590" width="2058" height="1" fill="#ececec"/><rect x="406" y="711.0" width="2058" height="1" fill="#9e9e9e"/><line x1="1057.9" y1="348.0" x2="1057.9" y2="712.0" stroke="#555" stroke-width="1" stroke-dasharray="1 1"/><polyline points="418.0,605.8 440.9,669.5 463.7,624.0 486.6,639.2 509.4,596.7 532.3,678.6 555.1,654.4 578.0,596.7 600.8,645.3 623.7,639.2 646.5,648.3 669.4,651.3 692.2,639.2 715.1,648.3 738.0,639.2 760.8,633.1 783.7,648.3 806.5,675.6 829.4,672.6 852.2,669.5 875.1,654.4 897.9,621.0 920.8,654.4 943.6,645.3 966.5,648.3 989.3,666.5 1012.2,633.1 1035.1,651.3 1057.9,636.2 1080.8,639.2 1103.6,642.2 1126.5,590.7 1149.3,618.0 1172.2,557.3 1195.0,542.1 1217.9,557.3 1240.7,590.7 1263.6,484.5 1286.4,375.3 1309.3,505.7 1332.2,554.3 1355.0,545.2 1377.9,511.8 1400.7,417.8 1423.6,475.4 1446.4,490.6 1469.3,454.2 1492.1,505.7 1515.0,499.7 1537.8,399.6 1560.7,445.1 1583.6,590.7 1606.4,593.7 1629.3,499.7 1652.1,508.8 1675.0,572.5 1697.8,466.3 1720.7,505.7 1743.5,566.4 1766.4,581.6 1789.2,572.5 1812.1,630.1 1834.9,545.2 1857.8,536.1 1880.7,530.0 1903.5,584.6 1926.4,499.7 1949.2,372.3 1972.1,587.6 1994.9,572.5 2017.8,478.4 2040.6,429.9 2063.5,530.0 2086.3,502.7 2109.2,533.0 2132.0,439.0 2154.9,590.7 2177.8,508.8 2200.6,520.9 2223.5,527.0 2246.3,533.0 2269.2,530.0 2292.0,527.0 2314.9,493.6 2337.7,426.9 2360.6,487.5 2383.4,502.7 2406.3,490.6 2429.1,478.4 2452.0,460.2" fill="none" stroke="#5e35b1" stroke-width="2" stroke-linejoin="miter"/><polyline points="418.0,712.0 440.9,590.7 463.7,590.7 486.6,712.0 509.4,712.0 532.3,712.0 555.1,590.7 578.0,712.0 600.8,712.0 623.7,712.0 646.5,712.0 669.4,590.7 692.2,712.0 715.1,712.0 738.0,590.7 760.8,590.7 783.7,712.0 806.5,712.0 829.4,712.0 852.2,712.0 875.1,712.0 897.9,712.0 920.8,712.0 943.6,712.0 966.5,712.0 989.3,712.0 1012.2,712.0 1035.1,712.0 1057.9,590.7 1080.8,469.3 1103.6,712.0 1126.5,712.0 1149.3,712.0 1172.2,712.0 1195.0,712.0 1217.9,712.0 1240.7,712.0 1263.6,469.3 1286.4,590.7 1309.3,590.7 1332.2,712.0 1355.0,712.0 1377.9,712.0 1400.7,712.0 1423.6,712.0 1446.4,590.7 1469.3,590.7 1492.1,712.0 1515.0,590.7 1537.8,590.7 1560.7,712.0 1583.6,712.0 1606.4,590.7 1629.3,590.7 1652.1,712.0 1675.0,712.0 1697.8,712.0 1720.7,712.0 1743.5,590.7 1766.4,712.0 1789.2,712.0 1812.1,590.7 1834.9,712.0 1857.8,469.3 1880.7,712.0 1903.5,712.0 1926.4,712.0 1949.2,712.0 1972.1,712.0 1994.9,712.0 2017.8,590.7 2040.6,590.7 2063.5,590.7 2086.3,712.0 2109.2,712.0 2132.0,712.0 2154.9,712.0 2177.8,712.0 2200.6,712.0 2223.5,348.0 2246.3,348.0 2269.2,590.7 2292.0,712.0 2314.9,712.0 2337.7,712.0 2360.6,590.7 2383.4,712.0 2406.3,712.0 2429.1,712.0 2452.0,712.0" fill="none" stroke="#4f82ee" stroke-width="2" stroke-linejoin="miter" stroke-linecap="square"/><circle cx="1057.9" cy="590.7" r="4" fill="#4f82ee"/><circle cx="1057.9" cy="636.2" r="4" fill="#5e35b1"/></svg>
<span class="t" style="left:386.00px;top:323.00px;font-size:12px;line-height:16px;color:#757575;">Clicks</span>
<span class="t" style="left:2432.31px;top:323.00px;font-size:12px;line-height:16px;color:#757575;transform:scaleX(1.0203);transform-origin:right center;">Impressions</span>
<span class="t" style="left:393.31px;top:703.50px;font-size:12px;line-height:16px;color:#757575;">0</span>
<span class="t" style="left:393.31px;top:582.17px;font-size:12px;line-height:16px;color:#757575;">1</span>
<span class="t" style="left:393.31px;top:460.83px;font-size:12px;line-height:16px;color:#757575;">2</span>
<span class="t" style="left:393.31px;top:339.50px;font-size:12px;line-height:16px;color:#757575;">3</span>
<span class="t" style="left:2470.00px;top:703.50px;font-size:12px;line-height:16px;color:#757575;">0</span>
<span class="t" style="left:2470.00px;top:582.17px;font-size:12px;line-height:16px;color:#757575;">40</span>
<span class="t" style="left:2470.00px;top:460.83px;font-size:12px;line-height:16px;color:#757575;">80</span>
<span class="t" style="left:2470.00px;top:339.50px;font-size:12px;line-height:16px;color:#757575;">120</span>
<span class="t" style="left:397.98px;top:724.80px;font-size:12px;line-height:16px;color:#757575;transform:scaleX(1.0663);transform-origin:center center;">12/8/25</span>
<span class="t" style="left:508.91px;top:724.80px;font-size:12px;line-height:16px;color:#757575;transform:scaleX(1.0582);transform-origin:center center;">12/13/25</span>
<span class="t" style="left:623.18px;top:724.80px;font-size:12px;line-height:16px;color:#757575;transform:scaleX(1.0582);transform-origin:center center;">12/18/25</span>
<span class="t" style="left:737.45px;top:724.80px;font-size:12px;line-height:16px;color:#757575;transform:scaleX(1.0582);transform-origin:center center;">12/23/25</span>
<span class="t" style="left:851.72px;top:724.80px;font-size:12px;line-height:16px;color:#757575;transform:scaleX(1.0582);transform-origin:center center;">12/28/25</span>
<span class="t" style="left:972.66px;top:724.80px;font-size:12px;line-height:16px;color:#757575;transform:scaleX(1.0775);transform-origin:center center;">1/2/26</span>
<span class="t" style="left:1086.93px;top:724.80px;font-size:12px;line-height:16px;color:#757575;transform:scaleX(1.0775);transform-origin:center center;">1/7/26</span>
<span class="t" style="left:1197.86px;top:724.80px;font-size:12px;line-height:16px;color:#757575;transform:scaleX(1.0663);transform-origin:center center;">1/12/26</span>
<span class="t" style="left:1312.13px;top:724.80px;font-size:12px;line-height:16px;color:#757575;transform:scaleX(1.0663);transform-origin:center center;">1/17/26</span>
<span class="t" style="left:1426.40px;top:724.80px;font-size:12px;line-height:16px;color:#757575;transform:scaleX(1.0663);transform-origin:center center;">1/22/26</span>
<span class="t" style="left:1540.67px;top:724.80px;font-size:12px;line-height:16px;color:#757575;transform:scaleX(1.0663);transform-origin:center center;">1/27/26</span>
<span class="t" style="left:1658.28px;top:724.80px;font-size:12px;line-height:16px;color:#757575;transform:scaleX(1.0775);transform-origin:center center;">2/1/26</span>
<span class="t" style="left:1772.55px;top:724.80px;font-size:12px;line-height:16px;color:#757575;transform:scaleX(1.0775);transform-origin:center center;">2/6/26</span>
<span class="t" style="left:1883.93px;top:724.80px;font-size:12px;line-height:16px;color:#757575;transform:scaleX(1.0905);transform-origin:center center;">2/11/26</span>
<span class="t" style="left:1997.75px;top:724.80px;font-size:12px;line-height:16px;color:#757575;transform:scaleX(1.0663);transform-origin:center center;">2/16/26</span>
<span class="t" style="left:2112.02px;top:724.80px;font-size:12px;line-height:16px;color:#757575;transform:scaleX(1.0663);transform-origin:center center;">2/21/26</span>
<span class="t" style="left:2226.29px;top:724.80px;font-size:12px;line-height:16px;color:#757575;transform:scaleX(1.0663);transform-origin:center center;">2/26/26</span>
<span class="t" style="left:2343.90px;top:724.80px;font-size:12px;line-height:16px;color:#757575;transform:scaleX(1.0775);transform-origin:center center;">3/3/26</span>
<div class="b" style="left:1068px;top:393.5px;width:274px;height:187.5px;background:rgba(255,255,255,.93);border:1px solid #dcdcdc;border-radius:2px;box-shadow:0 1px 3px rgba(0,0,0,.18)"></div>
<span class="t" style="left:1085.00px;top:410.40px;font-size:14px;line-height:18px;color:#616161;font-weight:700;transform:scaleX(0.9535);transform-origin:left center;">Monday, Jan 5</span>
<div class="b" style="left:1092px;top:452.5px;width:11px;height:3px;background:#4f82ee;border-radius:2px"></div>
<span class="t" style="left:1115.00px;top:444.50px;font-size:15px;line-height:20px;color:#757575;transform:scaleX(0.9500);transform-origin:left center;">Clicks</span>
<span class="t" style="left:1316.66px;top:444.50px;font-size:15px;line-height:20px;color:#757575;">1</span>
<div class="b" style="left:1092px;top:488.5px;width:11px;height:3px;background:#5e35b1;border-radius:2px"></div>
<span class="t" style="left:1115.00px;top:480.50px;font-size:15px;line-height:20px;color:#757575;transform:scaleX(0.9523);transform-origin:left center;">Impressions</span>
<span class="t" style="left:1308.31px;top:480.50px;font-size:15px;line-height:20px;color:#757575;transform:scaleX(0.9588);transform-origin:right center;">25</span>
<span class="t" style="left:1085.00px;top:520.00px;font-size:12px;line-height:16px;color:#757575;transform:scaleX(0.9820);transform-origin:left center;">Right-click or use Ctrl + Enter to add an</span>
<span class="t" style="left:1085.00px;top:540.00px;font-size:12px;line-height:16px;color:#757575;transform:scaleX(1.0167);transform-origin:left center;">annotation</span>
<!-- table card -->
<div class="b" style="left:369.5px;top:788.7px;width:2143.5px;height:500px;background:#fff;border-radius:12px 12px 0 0"></div>
<span class="t" style="left:549.49px;top:811.30px;font-size:14px;line-height:18px;color:#1f1f1f;-webkit-text-stroke:0.4px #1f1f1f;transform:scaleX(0.8728);transform-origin:center center;">QUERIES</span>
<span class="t" style="left:880.20px;top:811.30px;font-size:14px;line-height:18px;color:#5f6368;-webkit-text-stroke:0.3px #5f6368;transform:scaleX(0.8898);transform-origin:center center;">PAGES</span>
<span class="t" style="left:1195.17px;top:811.30px;font-size:14px;line-height:18px;color:#5f6368;-webkit-text-stroke:0.3px #5f6368;transform:scaleX(0.9096);transform-origin:center center;">COUNTRIES</span>
<span class="t" style="left:1544.27px;top:811.30px;font-size:14px;line-height:18px;color:#5f6368;-webkit-text-stroke:0.3px #5f6368;transform:scaleX(0.9029);transform-origin:center center;">DEVICES</span>
<span class="t" style="left:1870.81px;top:811.30px;font-size:14px;line-height:18px;color:#5f6368;-webkit-text-stroke:0.3px #5f6368;transform:scaleX(0.9353);transform-origin:center center;">SEARCH APPEARANCE</span>
<span class="t" style="left:2294.75px;top:811.30px;font-size:14px;line-height:18px;color:#5f6368;-webkit-text-stroke:0.3px #5f6368;transform:scaleX(0.9166);transform-origin:center center;">DAYS</span>
<div class="b" style="left:370px;top:853px;width:2143px;height:1px;background:#e0e0e0"></div>
<div class="b" style="left:416px;top:851px;width:329px;height:2px;background:#1f1f1f"></div>
<svg class="b" style="left:2464px;top:864px;" width="25" height="25" viewBox="0 0 25 25" fill="#3c4043"><g transform="translate(0.00 0.00) scale(1.0000)"><path d="M10 18h4v-2h-4v2zM3 6v2h18V6H3zm3 7h12v-2H6v2z"/></g></svg>
<div class="b" style="left:370px;top:905px;width:2143px;height:1px;background:#e0e0e0"></div>
<span class="t" style="left:394.00px;top:926.00px;font-size:12px;line-height:16px;color:#5f6368;">Top queries</span>
<svg class="b" style="left:2280px;top:926px;" width="17" height="17" viewBox="0 0 17 17" fill="#1f1f1f"><g transform="translate(0.20 0.00) scale(0.6500)"><path d="M20 12l-1.41-1.41L13 16.17V4h-2v12.17l-5.58-5.59L4 12l8 8 8-8z"/></g></svg>
<span class="t" style="left:2303.00px;top:926.00px;font-size:12px;line-height:16px;color:#1f1f1f;-webkit-text-stroke:0.3px #1f1f1f;transform:scaleX(1.0312);transform-origin:right center;">Clicks</span>
<span class="t" style="left:2420.31px;top:926.00px;font-size:12px;line-height:16px;color:#5f6368;transform:scaleX(1.0203);transform-origin:right center;">Impressions</span>
<div class="b" style="left:370px;top:962px;width:2143px;height:1px;background:#e0e0e0"></div>
<span class="t" style="left:394.00px;top:978.00px;font-size:13px;line-height:17px;color:#1f1f1f;transform:scaleX(1.0150);transform-origin:left center;">black gem limo</span>
<span class="t" style="left:2320.53px;top:978.00px;font-size:13px;line-height:17px;color:#3f6fd8;transform:scaleX(1.0700);transform-origin:right center;">12</span>
<span class="t" style="left:2470.53px;top:978.00px;font-size:13px;line-height:17px;color:#6a3ab2;transform:scaleX(1.0700);transform-origin:right center;">74</span>
<div class="b" style="left:370px;top:1011px;width:2143px;height:1px;background:#e0e0e0"></div>
<span class="t" style="left:394.00px;top:1027.00px;font-size:13px;line-height:17px;color:#1f1f1f;">black limo service</span>
<span class="t" style="left:2327.77px;top:1027.00px;font-size:13px;line-height:17px;color:#3f6fd8;transform:scaleX(1.0700);transform-origin:right center;">2</span>
<span class="t" style="left:2470.53px;top:1027.00px;font-size:13px;line-height:17px;color:#6a3ab2;transform:scaleX(1.0700);transform-origin:right center;">55</span>
<div class="b" style="left:370px;top:1060px;width:2143px;height:1px;background:#e0e0e0"></div>
<span class="t" style="left:394.00px;top:1076.00px;font-size:13px;line-height:17px;color:#1f1f1f;transform:scaleX(1.0056);transform-origin:left center;">black car service san francisco</span>
<span class="t" style="left:2327.77px;top:1076.00px;font-size:13px;line-height:17px;color:#3f6fd8;transform:scaleX(1.0700);transform-origin:right center;">1</span>
<span class="t" style="left:2463.30px;top:1076.00px;font-size:13px;line-height:17px;color:#6a3ab2;transform:scaleX(1.0700);transform-origin:right center;">169</span>
<div class="b" style="left:370px;top:1109px;width:2143px;height:1px;background:#e0e0e0"></div>
<span class="t" style="left:394.00px;top:1125.00px;font-size:13px;line-height:17px;color:#1f1f1f;transform:scaleX(1.0208);transform-origin:left center;">black limo</span>
<span class="t" style="left:2327.77px;top:1125.00px;font-size:13px;line-height:17px;color:#3f6fd8;transform:scaleX(1.0700);transform-origin:right center;">1</span>
<span class="t" style="left:2470.53px;top:1125.00px;font-size:13px;line-height:17px;color:#6a3ab2;transform:scaleX(1.0700);transform-origin:right center;">31</span>
<div class="b" style="left:370px;top:1158px;width:2143px;height:1px;background:#e0e0e0"></div>
<span class="t" style="left:394.00px;top:1174.00px;font-size:13px;line-height:17px;color:#1f1f1f;transform:scaleX(1.0334);transform-origin:left center;">blacklimo</span>
<span class="t" style="left:2327.77px;top:1174.00px;font-size:13px;line-height:17px;color:#3f6fd8;transform:scaleX(1.0700);transform-origin:right center;">1</span>
<span class="t" style="left:2477.77px;top:1174.00px;font-size:13px;line-height:17px;color:#6a3ab2;transform:scaleX(1.0700);transform-origin:right center;">1</span>
<div class="b" style="left:370px;top:1207px;width:2143px;height:1px;background:#e0e0e0"></div>
<span class="t" style="left:394.00px;top:1223.00px;font-size:13px;line-height:17px;color:#1f1f1f;transform:scaleX(1.0139);transform-origin:left center;">wedding limos in concord</span>
<span class="t" style="left:2327.77px;top:1223.00px;font-size:13px;line-height:17px;color:#3f6fd8;transform:scaleX(1.0700);transform-origin:right center;">0</span>
<span class="t" style="left:2463.30px;top:1223.00px;font-size:13px;line-height:17px;color:#6a3ab2;transform:scaleX(1.0700);transform-origin:right center;">192</span>
<div class="b" style="left:370px;top:1256px;width:2143px;height:1px;background:#e0e0e0"></div>
</body></html>
